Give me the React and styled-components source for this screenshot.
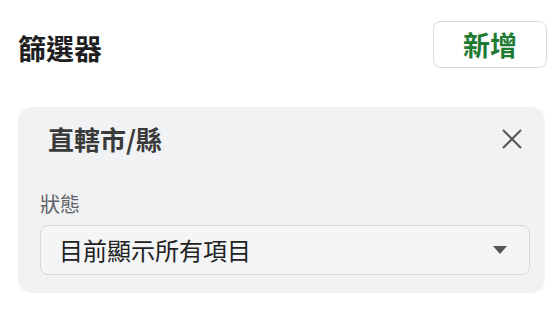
import React from 'react'
import styled, { createGlobalStyle } from 'styled-components'

const GlobalStyle = createGlobalStyle`
  body {
    margin: 0;
    background: #fff;
    font-family: "Noto Sans CJK TC", "Noto Sans", sans-serif;
  }
`

const Page = styled.div`
  width: 556px;
  height: 314px;
  display: flex;
  flex-direction: column;
  box-sizing: border-box;
  padding: 21px 9px 0 18px;
`

const Header = styled.div`
  display: flex;
  flex-direction: row;
  align-items: center;
  justify-content: space-between;
`

const Title = styled.div`
  font-size: 28px;
  font-weight: 700;
  color: #1f1f1f;
  line-height: 1.3;
  margin-top: 8px;
`

const AddButton = styled.button`
  width: 114px;
  height: 47px;
  box-sizing: border-box;
  border: 1.5px solid #d9d9d9;
  border-radius: 8px;
  background: #fff;
  color: #1e7b34;
  font-family: inherit;
  font-size: 27px;
  font-weight: 700;
  line-height: 1;
  padding: 0;
`

const Card = styled.div`
  margin-top: 39px;
  width: 527px;
  box-sizing: border-box;
  background: #f1f2f4;
  border-radius: 14px;
  padding: 10px 15px 18px 22px;
  display: flex;
  flex-direction: column;
`

const CardHeader = styled.div`
  height: 44px;
  display: flex;
  align-items: center;
  justify-content: space-between;
  padding: 0 7px 0 8px;
`

const CardTitle = styled.div`
  font-size: 26px;
  font-weight: 600;
  color: #3a3a3a;
  line-height: 1.3;
`

const CloseIcon = styled.svg`
  width: 22px;
  height: 22px;
  display: block;
`

const Label = styled.div`
  margin-top: 29px;
  font-size: 20px;
  line-height: 28px;
  color: #5f6368;
`

const Select = styled.div`
  margin-top: 7px;
  height: 50px;
  box-sizing: border-box;
  border: 1.5px solid #d6d7d9;
  border-radius: 8px;
  background: #f4f5f7;
  display: flex;
  align-items: center;
  justify-content: space-between;
  padding: 0 22px 0 18px;
`

const SelectText = styled.div`
  font-size: 24px;
  color: #222;
  line-height: 1;
`

const Caret = styled.div`
  width: 0;
  height: 0;
  border-left: 7.5px solid transparent;
  border-right: 7.5px solid transparent;
  border-top: 8px solid #555;
`

export default function App() {
  return (
    <>
      <GlobalStyle />
      <Page>
        <Header>
          <Title>篩選器</Title>
          <AddButton>新增</AddButton>
        </Header>
        <Card>
          <CardHeader>
            <CardTitle>直轄市/縣</CardTitle>
            <CloseIcon viewBox="0 0 22 22">
              <path d="M2 2 L20 20 M20 2 L2 20" stroke="#555" strokeWidth="2" fill="none" />
            </CloseIcon>
          </CardHeader>
          <Label>狀態</Label>
          <Select>
            <SelectText>目前顯示所有項目</SelectText>
            <Caret />
          </Select>
        </Card>
      </Page>
    </>
  )
}
